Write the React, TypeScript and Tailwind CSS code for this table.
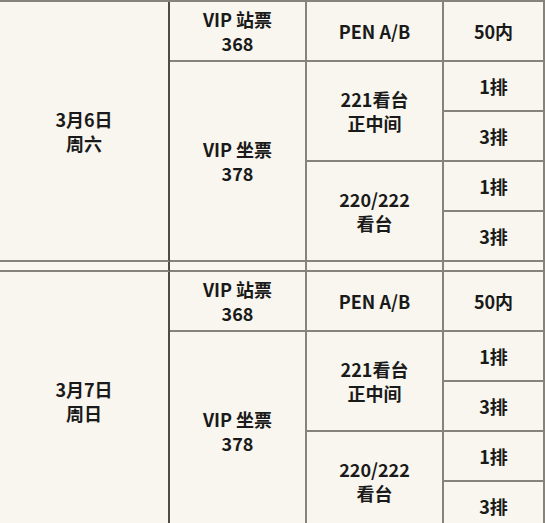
const font = { fontFamily: '"Noto Sans CJK SC", "Noto Sans", sans-serif' };

type CellProps = {
    col: string;
    row: string;
    lines?: string[];
    dark?: boolean;
};

function Cell({ col, row, lines = [], dark = false }: CellProps) {
    return (
        <div
            className={`${col} ${row} flex flex-col items-center justify-center border-b-2 border-r-2 border-b-[#85837b] ${
                dark ? 'border-r-[#4d4c48]' : 'border-r-[#85837b]'
            } text-center text-[18px] font-bold leading-[24px] text-[#1a1a1a]`}
        >
            {lines.map((l) => (
                <div key={l}>{l}</div>
            ))}
        </div>
    );
}

export default function App() {
    return (
        <div className="h-[523px] w-[545px] overflow-hidden bg-[#f8f6ee]" style={font}>
            <div className="grid grid-cols-[170px_137px_137px_1fr] grid-rows-[60px_50px_50px_50px_50px_10px_60px_50px_50px_50px_50px] border-t-2 border-t-[#85837b]">
                {/* 3月6日 */}
                <Cell col="col-start-1" row="row-start-1 row-span-5" lines={['3月6日', '周六']} dark />
                <Cell col="col-start-2" row="row-start-1" lines={['VIP 站票', '368']} />
                <Cell col="col-start-3" row="row-start-1" lines={['PEN A/B']} />
                <Cell col="col-start-4" row="row-start-1" lines={['50内']} />
                <Cell col="col-start-2" row="row-start-2 row-span-4" lines={['VIP 坐票', '378']} />
                <Cell col="col-start-3" row="row-start-2 row-span-2" lines={['221看台', '正中间']} />
                <Cell col="col-start-4" row="row-start-2" lines={['1排']} />
                <Cell col="col-start-4" row="row-start-3" lines={['3排']} />
                <Cell col="col-start-3" row="row-start-4 row-span-2" lines={['220/222', '看台']} />
                <Cell col="col-start-4" row="row-start-4" lines={['1排']} />
                <Cell col="col-start-4" row="row-start-5" lines={['3排']} />

                {/* spacer */}
                <Cell col="col-start-1" row="row-start-6" dark />
                <Cell col="col-start-2" row="row-start-6" />
                <Cell col="col-start-3" row="row-start-6" />
                <Cell col="col-start-4" row="row-start-6" />

                {/* 3月7日 */}
                <Cell col="col-start-1" row="row-start-7 row-span-5" lines={['3月7日', '周日']} dark />
                <Cell col="col-start-2" row="row-start-7" lines={['VIP 站票', '368']} />
                <Cell col="col-start-3" row="row-start-7" lines={['PEN A/B']} />
                <Cell col="col-start-4" row="row-start-7" lines={['50内']} />
                <Cell col="col-start-2" row="row-start-8 row-span-4" lines={['VIP 坐票', '378']} />
                <Cell col="col-start-3" row="row-start-8 row-span-2" lines={['221看台', '正中间']} />
                <Cell col="col-start-4" row="row-start-8" lines={['1排']} />
                <Cell col="col-start-4" row="row-start-9" lines={['3排']} />
                <Cell col="col-start-3" row="row-start-10 row-span-2" lines={['220/222', '看台']} />
                <Cell col="col-start-4" row="row-start-10" lines={['1排']} />
                <Cell col="col-start-4" row="row-start-11" lines={['3排']} />
            </div>
        </div>
    );
}
